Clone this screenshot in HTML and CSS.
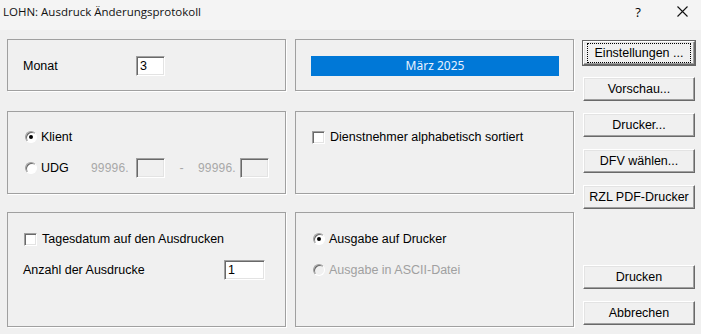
FILE: index.html
```html
<!DOCTYPE html>
<html lang="de">
<head>
    <meta charset="UTF-8">
    <title>LOHN: Ausdruck Änderungsprotokoll</title>
    <link rel="stylesheet" href="styles.css">
</head>
<body>

    <div class="titlebar">
        <span class="title">LOHN: Ausdruck Änderungsprotokoll</span>
        <span class="help">?</span>
        <span class="close">
            <svg width="11" height="11" viewBox="0 0 11 11"><path d="M0.5 0.5L10.5 10.5M10.5 0.5L0.5 10.5" stroke="#111" stroke-width="1.1" fill="none"/></svg>
        </span>
    </div>

    <div class="dialog">
        <div class="panels">
            <div class="panel panel-top">
                <div class="row">
                    <span class="label label-monat">Monat</span>
                    <input class="field field-monat" type="text" value="3">
                </div>
            </div>

            <div class="panel panel-top">
                <div class="month-bar">März 2025</div>
            </div>

            <div class="panel panel-mid">
                <div class="row">
                    <span class="radio checked"></span>
                    <span class="label">Klient</span>
                </div>
                <div class="row row-second">
                    <span class="radio"></span>
                    <span class="label label-udg">UDG</span>
                    <span class="prefix">99996.</span>
                    <span class="field small-box"></span>
                    <span class="dash">-</span>
                    <span class="prefix prefix-to">99996.</span>
                    <span class="field small-box"></span>
                </div>
            </div>

            <div class="panel panel-mid">
                <div class="row">
                    <span class="check"></span>
                    <span class="label">Dienstnehmer alphabetisch sortiert</span>
                </div>
            </div>

            <div class="panel panel-low">
                <div class="row">
                    <span class="check"></span>
                    <span class="label">Tagesdatum auf den Ausdrucken</span>
                </div>
                <div class="row row-second">
                    <span class="label label-anzahl">Anzahl der Ausdrucke</span>
                    <input class="field field-anzahl" type="text" value="1">
                </div>
            </div>

            <div class="panel panel-low">
                <div class="row">
                    <span class="radio checked"></span>
                    <span class="label">Ausgabe auf Drucker</span>
                </div>
                <div class="row row-second disabled">
                    <span class="radio"></span>
                    <span class="label">Ausgabe in ASCII-Datei</span>
                </div>
            </div>
        </div>

        <div class="buttons">
            <button class="btn default"><span class="focus">Einstellungen ...</span></button>
            <button class="btn">Vorschau...</button>
            <button class="btn">Drucker...</button>
            <button class="btn">DFV wählen...</button>
            <button class="btn">RZL PDF-Drucker</button>
            <div class="spacer"></div>
            <button class="btn">Drucken</button>
            <button class="btn">Abbrechen</button>
        </div>
    </div>

</body>
</html>
```

FILE: styles.css
```css
body {
    margin: 0;
    padding: 0;
    width: 701px;
    height: 334px;
    overflow: hidden;
    background: #f0f0f0;
    font-family: "Liberation Sans", Arial, sans-serif;
    font-size: 12.5px;
    color: #000;
}

.titlebar {
    height: 30px;
    display: flex;
    align-items: center;
    background: #f4f4f4;
}

.title {
    flex: 1;
    padding-left: 3px;
    padding-bottom: 7px;
    font-family: "Open Sans", "Noto Sans", sans-serif;
    font-size: 11.5px;
    color: #111;
}

.help {
    width: 20px;
    text-align: center;
    margin-right: 29px;
    padding-bottom: 7px;
    font-family: "Open Sans", sans-serif;
    font-size: 13px;
}

.close {
    width: 11px;
    margin-right: 13px;
    padding-bottom: 8px;
    display: flex;
}

.dialog {
    display: flex;
    align-items: flex-start;
    padding: 9px 0 0 7px;
}

/* Group boxes */
.panels {
    display: grid;
    grid-template-columns: 279px 279px;
    align-content: start;
    column-gap: 9px;
}

.panel {
    box-sizing: border-box;
    border: 1px solid #a0a0a0;
    box-shadow: 1px 1px 0 #fff;
    padding-left: 15px;
}

.panel-top {
    height: 52px;
    padding-top: 16px;
}

.panel-mid {
    height: 83px;
    margin-top: 20px;
    padding-top: 15px;
}

.panel-low {
    height: 115px;
    margin-top: 18px;
    padding-top: 16px;
}

.row {
    display: flex;
    align-items: center;
    height: 20px;
}

.row-second {
    margin-top: 11px;
}

.label-monat {
    width: 113px;
}

.label-udg {
    width: 50px;
}

.label-anzahl {
    width: 201px;
}

.field {
    box-sizing: border-box;
    height: 20px;
    border: 1px solid;
    border-color: #a0a0a0 #fff #fff #a0a0a0;
    box-shadow: inset 1px 1px 0 #696969, inset -1px -1px 0 #e3e3e3;
    background: #fff;
    font-family: "Liberation Sans", Arial, sans-serif;
    font-size: 12.5px;
    padding: 0 0 0 3px;
    margin: 0;
    outline: none;
}

.field-monat {
    width: 29px;
}

.field-anzahl {
    width: 41px;
}

.small-box {
    width: 29px;
    background: #f0f0f0;
}

.prefix {
    color: #a8a8a8;
    font-size: 12px;
    letter-spacing: 0.2px;
    width: 45px;
}

.prefix-to {
    width: 42px;
}

.dash {
    color: #a8a8a8;
    width: 33px;
    text-align: center;
}

/* Radio buttons and check boxes */
.radio {
    box-sizing: border-box;
    width: 12px;
    height: 12px;
    border-radius: 50%;
    border: 1px solid;
    border-color: #a0a0a0 #fff #fff #a0a0a0;
    box-shadow: inset 1px 1px 0 #696969;
    background: #fff;
    margin: 0 4px 0 2px;
    position: relative;
}

.radio.checked::after {
    content: "";
    position: absolute;
    left: 3px;
    top: 3px;
    width: 4px;
    height: 4px;
    border-radius: 50%;
    background: #000;
}

.disabled .radio {
    background: #f0f0f0;
}

.disabled .label {
    color: #a0a0a0;
}

.check {
    box-sizing: border-box;
    width: 13px;
    height: 13px;
    border: 1px solid;
    border-color: #a0a0a0 #fff #fff #a0a0a0;
    box-shadow: inset 1px 1px 0 #696969, inset -1px -1px 0 #e3e3e3;
    background: #fff;
    margin: 0 5px 0 1px;
}

.month-bar {
    width: 248px;
    height: 20px;
    line-height: 20px;
    background: #0078d7;
    color: #e8f2ff;
    text-align: center;
    font-family: "Noto Sans", sans-serif;
    font-size: 12px;
}

/* Buttons */
.buttons {
    display: flex;
    flex-direction: column;
    margin-left: 9px;
    padding-top: 2px;
}

.btn {
    box-sizing: border-box;
    width: 112px;
    height: 24px;
    margin-bottom: 12px;
    border: 1px solid;
    border-color: #fff #696969 #696969 #fff;
    box-shadow: inset -1px -1px 0 #a0a0a0, inset 1px 1px 0 #e3e3e3;
    background: #f0f0f0;
    font-family: "Liberation Sans", Arial, sans-serif;
    font-size: 12.5px;
    color: #000;
    padding: 0;
}

.btn.default {
    outline: 1px solid #646464;
}

.focus {
    display: block;
    margin: 0 3px;
    padding: 2px 0;
    border: 1px dotted #000;
}

.spacer {
    height: 44px;
}
```
